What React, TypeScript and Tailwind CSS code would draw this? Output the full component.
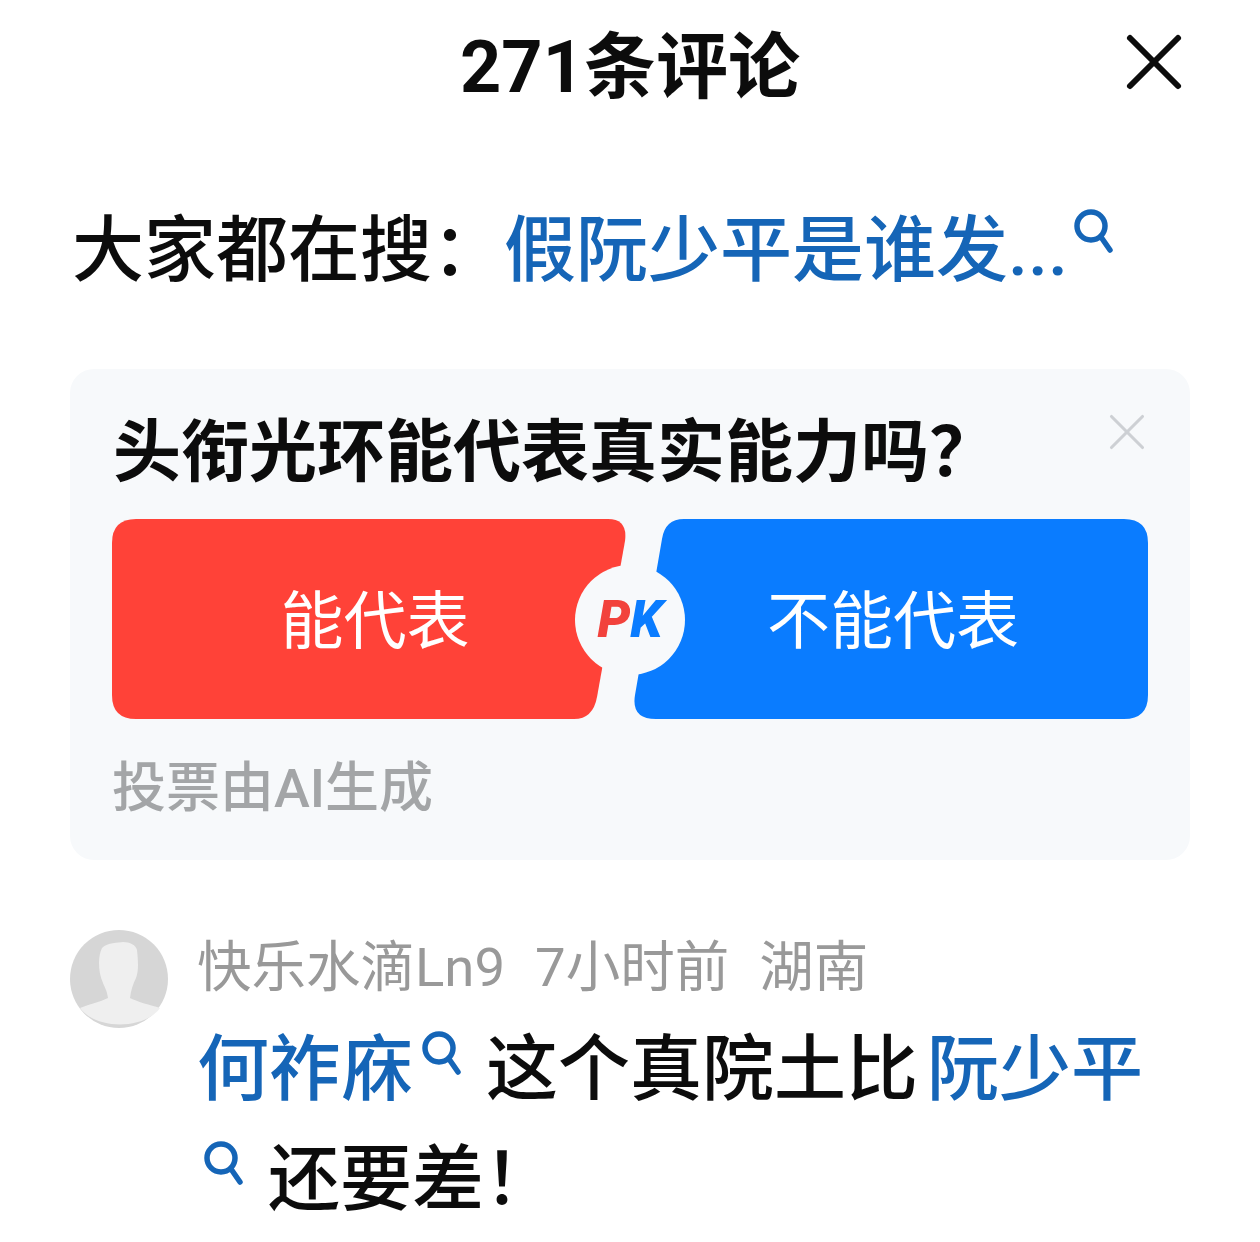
import React from "react";
import { X } from "lucide-react";

const cjk = "font-['Roboto','Noto_Sans_CJK_SC','Noto_Sans',sans-serif]";

const SearchMark: React.FC<{ className?: string }> = ({ className }) => (
  <svg viewBox="0 0 40 44" fill="none" stroke="#1565b7" strokeWidth="5.5" strokeLinecap="round" className={className}>
    <circle cx="18" cy="17" r="14" />
    <path d="M28 28 L37 41" />
  </svg>
);

const Avatar: React.FC = () => (
  <svg viewBox="0 0 98 98" className="w-[98px] h-[98px] shrink-0">
    <circle cx="49" cy="49" r="49" fill="#d6d6d6" />
    <path
      d="M32 18 C38 12 48 13 53 12 C60 12 66 15 67 20 C68 30 69 40 66 48 C63 54 61 60 60 68 C68 72 80 75 90 78 C74 100 26 100 10 78 C20 74 30 72 38 68 C37 60 34 56 33 53 C30 46 29 40 29 33 C29 27 30 22 32 18 Z"
      fill="#efefef"
    />
  </svg>
);

const VoteButtons: React.FC = () => (
  <div className="relative grid grid-cols-2 gap-2 h-[200px]">
    <button className="relative h-full text-white text-[63px] pl-[12px] pt-[7px] font-normal">
      <svg viewBox="0 0 514 200" className="absolute inset-0 w-full h-full">
        <path d="M24 0 H496 Q516 0 513 22 L485 178 Q481 200 462 200 H24 Q0 200 0 176 V24 Q0 0 24 0 Z" fill="#ff4238" />
      </svg>
      <span className="relative">能代表</span>
    </button>
    <button className="relative h-full text-white text-[63px] pl-[4px] pt-[7px] font-normal">
      <svg viewBox="0 0 514 200" className="absolute inset-0 w-full h-full">
        <path d="M50 0 H490 Q514 0 514 24 V176 Q514 200 490 200 H22 Q-3 200 1 176 L28 20 Q31 0 50 0 Z" fill="#0a7cff" />
      </svg>
      <span className="relative">不能代表</span>
    </button>
    <div className="absolute left-[463px] top-[46px] w-[110px] h-[110px] rounded-full bg-[#f7f9fb] flex items-center justify-center text-[52px] font-black italic leading-none">
      <span className="text-[#f2423c]">P</span>
      <span className="text-[#0a7cff]">K</span>
    </div>
  </div>
);

export default function App() {
  return (
    <div className={`${cjk} w-[1260px] h-[1242px] bg-white overflow-hidden text-[#0c0c0c] text-[72px] font-medium flex flex-col`}>
      <header className="grid grid-cols-[1fr_auto_1fr] items-center h-[130px] pr-[58px] pl-[58px]">
        <div />
        <h1 className="font-bold text-[72px] leading-none mt-[6px]">271条评论</h1>
        <X size={96} strokeWidth={1.5} strokeLinecap="round" className="text-[#0c0c0c] justify-self-end -mt-[7px]" />
      </header>

      <div className="flex items-start h-[110px] mt-[66px] pl-[72px] leading-[110px]">
        <span>大家都在搜：</span>
        <span className="text-[#1565b7]">假阮少平是谁发...</span>
        <SearchMark className="w-[40px] h-[44px] mt-[13px] ml-[5px]" />
      </div>

      <section className="mx-[70px] mt-[63px] h-[491px] rounded-[24px] bg-[#f7f9fb] px-[42px] flex flex-col">
        <div className="flex items-start justify-between h-[150px] pt-[39px]">
          <h2 className="font-bold text-[68px] leading-[90px] pl-[1px]">头衔光环能代表真实能力吗？</h2>
          <X size={62} strokeWidth={1.2} className="text-[#cdd0d4] -mt-[7px] -mr-[10px] shrink-0" />
        </div>
        <VoteButtons />
        <p className="text-[54px] font-medium text-[#a3a5a7] leading-[70px] mt-[35px]">投票由AI生成</p>
      </section>

      <div className="flex gap-[29px] pl-[70px] pr-[100px] mt-[70px]">
        <Avatar />
        <div className="flex-1 min-w-0">
          <div className="flex gap-[30px] text-[54.5px] font-normal text-[#999999] leading-[74px]">
            <span>快乐水滴Ln9</span>
            <span>7小时前</span>
            <span>湖南</span>
          </div>
          <p className="leading-[110px] mt-[11px]">
            <span className="text-[#1565b7]">何祚庥</span>
            <SearchMark className="inline-block w-[40px] h-[44px] ml-[8px] mr-[25px] align-[19px]" />
            这个真院土比
            <span className="text-[#1565b7] ml-[9px]">阮少平</span>
            <SearchMark className="inline-block w-[40px] h-[44px] ml-[6px] mr-[25px] align-[19px]" />
            还要差！
          </p>
        </div>
      </div>
    </div>
  );
}
